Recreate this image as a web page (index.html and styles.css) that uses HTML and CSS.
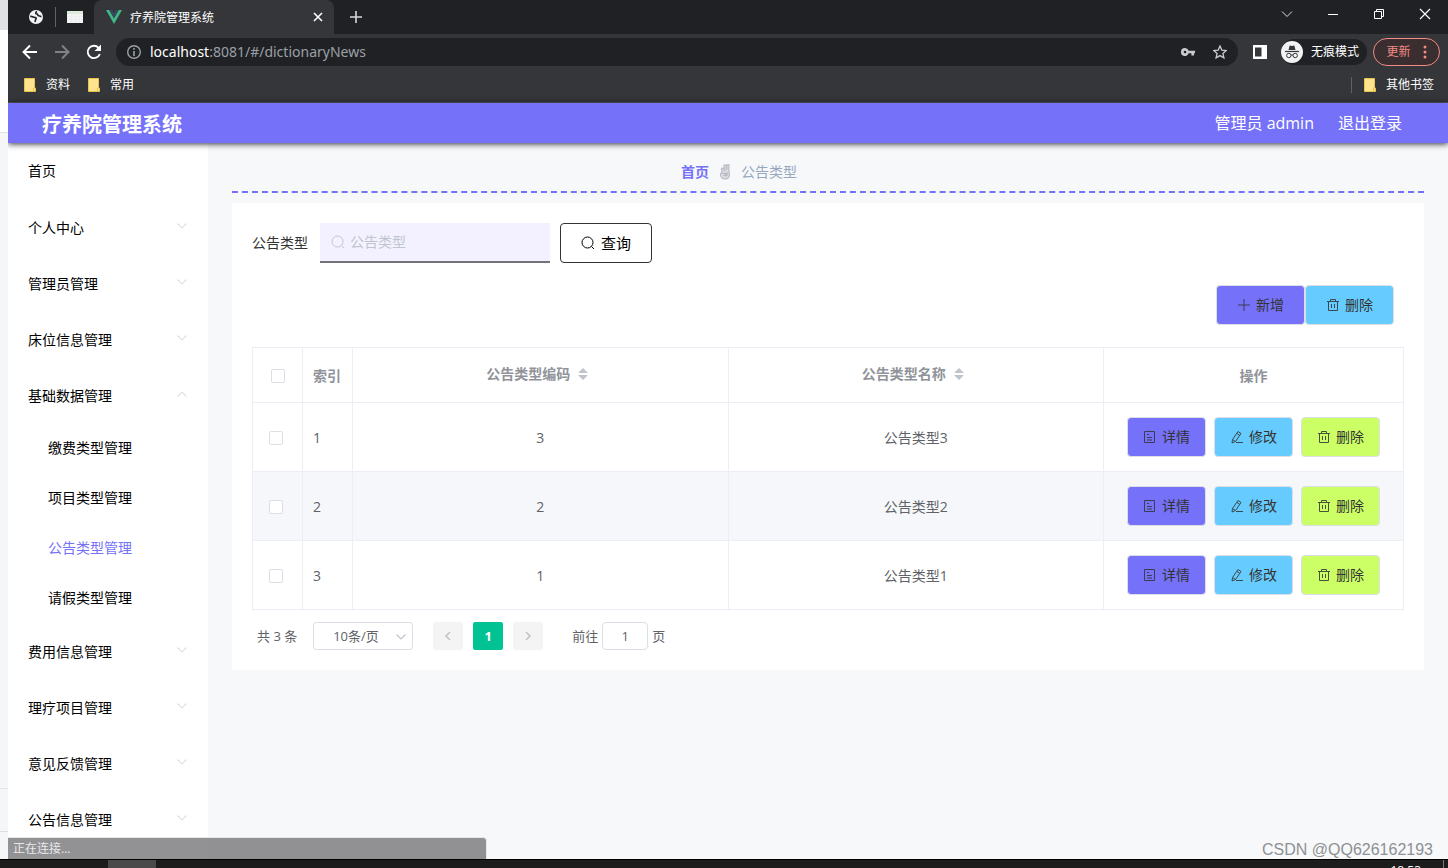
FILE: index.html
```html
<!DOCTYPE html>
<html lang="zh-CN">
<head>
<meta charset="utf-8">
<title>疗养院管理系统</title>
<link rel="stylesheet" href="styles.css">
</head>
<body>
<svg class="defs" aria-hidden="true">
  <symbol id="chev" viewBox="0 0 12 12"><path d="M1.500 3.500 6 8l4.500-4.500" fill="none" stroke="currentColor" stroke-width="1.200"/></symbol>
  <symbol id="search" viewBox="0 0 14 14"><circle cx="6.500" cy="6.500" r="5.500" fill="none" stroke="currentColor"/><path d="m10.500 10.500 2.500 2.500" stroke="currentColor"/></symbol>
  <symbol id="trash" viewBox="0 0 14 14"><path d="M1 3.500h12M2.500 3.500v9h9v-9M4.500 3.500v-2h5v2M5.500 6v4M8.500 6v4" fill="none" stroke="currentColor"/></symbol>
  <symbol id="doc" viewBox="0 0 14 14"><path d="M1.500 1.500h10v11h-10zM4 4.500h2M4 7.500h5M4 10h5" fill="none" stroke="currentColor"/></symbol>
  <symbol id="edit" viewBox="0 0 14 14"><path d="M8 1.500 11 3.500 5.500 11.500 2 13 2.500 9.500zM7 3.500l2.800 2M2.500 9.500l3 2M6 12.500h7" fill="none" stroke="currentColor"/></symbol>
  <symbol id="plus" viewBox="0 0 14 14"><path d="M7 1v12M1 7h12" stroke="currentColor"/></symbol>
  <symbol id="folder" viewBox="0 0 12 14"><path d="M.5.500h10v9.500h1v3.500H.5z" fill="#ffe48f" stroke="#e8c44c"/><path d="M9.500 13.500V10h1" fill="none" stroke="#e8c44c"/></symbol>
</svg>
<div class="screen">
  <div class="desk">
    <div class="behind"><i class="b-tab"></i><i class="b-page"></i><i class="b-rest"></i><i class="b-row"></i><i class="b-foot"></i></div>
    <div class="browser">
      <div class="tabs">
        <button class="pinned" aria-label="标签页"><svg width="14" height="14" viewBox="0 0 14 14"><circle cx="7" cy="7" r="7" fill="#f1f3f4"/><path d="M1.200 6.500c1.800-.5 2.300.8 3.800.8 2 0 2.800.8 1.800 2-.6.800-.3 1.500-.8 2.700M8 1.500C6 2.500 6.500 4 8.200 4c.5 1.500 1.500 2 2.300 2 .8.200 1.300.6 2 .6" fill="none" stroke="#202124" stroke-width="1.600"/></svg></button>
        <i class="sep"></i>
        <button class="pinned" aria-label="标签页"><svg width="16" height="12" viewBox="0 0 16 12"><path d="M0 0h16v12H0z" fill="#f2f5f3"/><path d="M0 0h16v3H0z" fill="#dcebdc"/><path d="M0 5.500h16M0 8.500h16M4.500 3v9M8.500 3v9M12.500 3v9" stroke="#ebeeec"/></svg></button>
        <div class="tab">
          <svg width="16" height="14" viewBox="0 0 16 14"><path d="M0 0h3.200L8 8.300 12.800 0H16L8 14z" fill="#41b883"/><path d="M3.200 0h3L8 3.200 9.800 0h3L8 8.300z" fill="#35495e"/></svg>
          <span class="tab-title">疗养院管理系统</span>
          <button class="x" aria-label="关闭标签页"><svg width="10" height="10" viewBox="0 0 10 10"><path d="m1 1 8 8M9 1 1 9" stroke="#fff" stroke-width="1.600"/></svg></button>
        </div>
        <button class="new" aria-label="新标签页"><svg width="12" height="12" viewBox="0 0 12 12"><path d="M6 0v12M0 6h12" stroke="#d5d7da" stroke-width="1.600"/></svg></button>
        <div class="win">
          <button aria-label="搜索标签页"><svg width="12" height="12" viewBox="0 0 12 12"><path d="m1 3.500 5 5 5-5" fill="none" stroke="#ddd"/></svg></button>
          <button aria-label="最小化"><svg width="12" height="12" viewBox="0 0 12 12"><path d="M1 6.500h10" stroke="#fff"/></svg></button>
          <button aria-label="还原"><svg width="12" height="12" viewBox="0 0 12 12"><path d="M1.500 3.500h7v7h-7zM3.500 3.500v-2h7v7h-2" fill="none" stroke="#fff"/></svg></button>
          <button aria-label="关闭"><svg width="12" height="12" viewBox="0 0 12 12"><path d="m1 1 10 10M11 1 1 11" stroke="#fff" stroke-width="1.200"/></svg></button>
        </div>
      </div>
      <div class="toolbar">
        <button aria-label="后退"><svg width="16" height="16" viewBox="0 0 16 16"><path d="M15 8H2M8 1.500 1.500 8 8 14.500" fill="none" stroke="#fff" stroke-width="1.900"/></svg></button>
        <button aria-label="前进"><svg width="16" height="16" viewBox="0 0 16 16"><path d="M1 8h13M8 1.500 14.500 8 8 14.500" fill="none" stroke="#808387" stroke-width="1.900"/></svg></button>
        <button aria-label="刷新"><svg width="16" height="16" viewBox="0 0 16 16"><path d="M13.800 10A6.200 6.200 0 1 1 12.600 3.800" fill="none" stroke="#fff" stroke-width="1.900"/><path d="M15 .5V7H8.500z" fill="#fff"/></svg></button>
        <div class="omni">
          <svg width="14" height="14" viewBox="0 0 14 14"><circle cx="7" cy="7" r="6.300" fill="none" stroke="#9aa0a6" stroke-width="1.400"/><path d="M7 3v1.800M7 6v5" stroke="#9aa0a6" stroke-width="1.600"/></svg>
          <span class="url"><b>localhost</b>:8081/#/dictionaryNews</span>
          <button aria-label="密码"><svg width="14" height="8" viewBox="0 0 14 8"><path fill="#c8cacd" fill-rule="evenodd" d="M4 0a4 4 0 0 1 3.700 2.700H14v2.600h-1v2.200h-2.600V5.300H7.700A4 4 0 1 1 4 0zm0 2.700a1.300 1.300 0 1 0 0 2.600 1.300 1.300 0 0 0 0-2.600z"/></svg></button>
          <button aria-label="收藏"><svg width="14" height="14" viewBox="0 0 14 14"><path d="m7 1 1.800 4.100 4.400.4-3.300 3 1 4.400L7 10.600l-3.900 2.300 1-4.400-3.300-3 4.400-.4z" fill="none" stroke="#c8cacd" stroke-width="1.300"/></svg></button>
        </div>
        <button class="side" aria-label="侧边栏"><svg width="14" height="14" viewBox="0 0 14 14"><path d="M0 0h14v14H0zM2 2.500v9h6.500v-9z" fill="#fff" fill-rule="evenodd"/></svg></button>
        <button class="incog"><svg width="22" height="22" viewBox="0 0 22 22"><circle cx="11" cy="11" r="11" fill="#f1f3f4"/><path d="m7.500 9 1.200-4.500L11 5l2.300-.5L14.500 9z" fill="#35363a"/><path d="M4 10.500h14" stroke="#35363a" stroke-width="1.200"/><g fill="none" stroke="#35363a"><circle cx="7.800" cy="14.500" r="2.200"/><circle cx="14.200" cy="14.500" r="2.200"/><path d="M10 14h2"/></g></svg>无痕模式</button>
        <button class="update">更新<svg width="4" height="14" viewBox="0 0 4 14" fill="#f28b82"><circle cx="2" cy="2" r="1.500"/><circle cx="2" cy="7" r="1.500"/><circle cx="2" cy="12" r="1.500"/></svg></button>
      </div>
      <div class="marks">
        <a href="#"><svg width="12" height="14"><use href="#folder"/></svg>资料</a>
        <a href="#"><svg width="12" height="14"><use href="#folder"/></svg>常用</a>
        <a href="#" class="other"><svg width="12" height="14"><use href="#folder"/></svg>其他书签</a>
      </div>
      <div class="app">
        <header class="top">
          <h1>疗养院管理系统</h1>
          <a href="#">管理员 admin</a>
          <a href="#">退出登录</a>
        </header>
        <div class="body">
          <nav class="nav">
            <a href="#" class="item home">首页</a>
            <a href="#" class="item">个人中心<svg width="12" height="12"><use href="#chev"/></svg></a>
            <a href="#" class="item">管理员管理<svg width="12" height="12"><use href="#chev"/></svg></a>
            <a href="#" class="item">床位信息管理<svg width="12" height="12"><use href="#chev"/></svg></a>
            <a href="#" class="item open">基础数据管理<svg width="12" height="12"><use href="#chev"/></svg></a>
            <a href="#" class="sub">缴费类型管理</a>
            <a href="#" class="sub">项目类型管理</a>
            <a href="#" class="sub active">公告类型管理</a>
            <a href="#" class="sub">请假类型管理</a>
            <a href="#" class="item">费用信息管理<svg width="12" height="12"><use href="#chev"/></svg></a>
            <a href="#" class="item">理疗项目管理<svg width="12" height="12"><use href="#chev"/></svg></a>
            <a href="#" class="item">意见反馈管理<svg width="12" height="12"><use href="#chev"/></svg></a>
            <a href="#" class="item">公告信息管理<svg width="12" height="12"><use href="#chev"/></svg></a>
          </nav>
          <main class="main">
            <div class="crumbs"><a href="#">首页</a><svg width="12" height="16" viewBox="0 0 12 16"><path d="M3 8 2.500 4.500 4.500 4 5.500 7 5 1h2l.5 5L8 .8h2L9.800 7l.7 3c0 3-1.500 5-4.500 5s-4.500-2-4.500-5z" fill="#dcdee2" stroke="#b9bcc4" stroke-width="1.200"/><path d="M3 9.500h3.500v2.200H4.500M8 8v4" fill="none" stroke="#b2b5be" stroke-width="1.200"/></svg><span>公告类型</span></div>
            <section class="card">
              <form class="query">
                <label for="q">公告类型</label>
                <div class="field"><svg width="14" height="14"><use href="#search"/></svg><input id="q" type="text" placeholder="公告类型"></div>
                <button type="button"><svg width="14" height="14"><use href="#search"/></svg>查询</button>
              </form>
              <div class="actions">
                <button class="btn wide violet"><svg width="14" height="14"><use href="#plus"/></svg>新增</button><button class="btn wide sky"><svg width="14" height="14"><use href="#trash"/></svg>删除</button>
              </div>
              <table>
                <colgroup><col class="c-s"><col class="c-s"><col><col><col class="c-op"></colgroup>
                <thead><tr>
                  <th class="chk"><input type="checkbox" aria-label="全选"></th>
                  <th class="idx">索引</th>
                  <th><span class="sort">公告类型编码<svg width="10" height="12" viewBox="0 0 10 12"><path d="m0 5 5-5 5 5zM0 7h10l-5 5z" fill="#c0c4cc"/></svg></span></th>
                  <th><span class="sort">公告类型名称<svg width="10" height="12" viewBox="0 0 10 12"><path d="m0 5 5-5 5 5zM0 7h10l-5 5z" fill="#c0c4cc"/></svg></span></th>
                  <th>操作</th>
                </tr></thead>
                <tbody>
                <tr><td class="chk"><input type="checkbox" aria-label="选择 1"></td><td class="idx">1</td><td>3</td><td>公告类型3</td>
                  <td class="op"><div class="ops"><button class="btn violet"><svg width="14" height="14"><use href="#doc"/></svg>详情</button><button class="btn sky"><svg width="14" height="14"><use href="#edit"/></svg>修改</button><button class="btn lime"><svg width="14" height="14"><use href="#trash"/></svg>删除</button></div></td></tr>
                <tr class="stripe"><td class="chk"><input type="checkbox" aria-label="选择 2"></td><td class="idx">2</td><td>2</td><td>公告类型2</td>
                  <td class="op"><div class="ops"><button class="btn violet"><svg width="14" height="14"><use href="#doc"/></svg>详情</button><button class="btn sky"><svg width="14" height="14"><use href="#edit"/></svg>修改</button><button class="btn lime"><svg width="14" height="14"><use href="#trash"/></svg>删除</button></div></td></tr>
                <tr><td class="chk"><input type="checkbox" aria-label="选择 3"></td><td class="idx">3</td><td>1</td><td>公告类型1</td>
                  <td class="op"><div class="ops"><button class="btn violet"><svg width="14" height="14"><use href="#doc"/></svg>详情</button><button class="btn sky"><svg width="14" height="14"><use href="#edit"/></svg>修改</button><button class="btn lime"><svg width="14" height="14"><use href="#trash"/></svg>删除</button></div></td></tr>
                </tbody>
              </table>
              <div class="pager">
                <span>共 3 条</span>
                <div class="size"><select aria-label="每页条数"><option>10条/页</option></select><svg width="12" height="12"><use href="#chev"/></svg></div>
                <div class="pages">
                  <button class="pg" aria-label="上一页" disabled><svg width="12" height="12" viewBox="0 0 12 12"><path d="M8 2 4 6l4 4" fill="none" stroke="#c0c4cc" stroke-width="1.600"/></svg></button>
                  <button class="pg on">1</button>
                  <button class="pg" aria-label="下一页" disabled><svg width="12" height="12" viewBox="0 0 12 12"><path d="m4 2 4 4-4 4" fill="none" stroke="#c0c4cc" stroke-width="1.600"/></svg></button>
                </div>
                <label class="jump">前往<input type="text" value="1">页</label>
              </div>
            </section>
          </main>
        </div>
      </div>
      <div class="status">正在连接...</div>
      <div class="mark">CSDN @QQ626162193</div>
    </div>
  </div>
  <div class="taskbar"><i class="task"></i><span class="clock">18:53</span><i class="peek"></i></div>
</div>
</body>
</html>
```
FILE: styles.css
```css
* { box-sizing: border-box; }
body { margin: 0; font-family: "Open Sans", "Noto Sans CJK SC", sans-serif; font-size: 14px; line-height: 20px; color: #606266; }
button, input, select { font: inherit; color: inherit; margin: 0; }
button { border: 0; background: none; padding: 0; display: inline-flex; align-items: center; justify-content: center; white-space: nowrap; }
a { text-decoration: none; color: inherit; }
svg { display: block; flex: none; }
.defs { display: none; }
.screen { height: 100vh; display: flex; flex-direction: column; overflow: hidden; }
.desk { flex: 1; min-height: 0; display: flex; }
.behind { width: 8px; display: flex; flex-direction: column; background: #f5f6f8; }
.b-tab { height: 30px; background: #dfe1e5; }
.b-page { height: 103px; background: #fff; border-bottom: 1px solid #e0e2e6; }
.b-rest { flex: 1; }
.b-row { height: 43px; border-top: 1px solid #e4e6ea; }
.b-foot { height: 28px; border-top: 1px solid #dcdee2; }
.browser { flex: 1; min-width: 0; display: flex; flex-direction: column; position: relative; overflow: hidden; }

.tabs { flex: none; height: 34px; background: #202124; display: flex; align-items: center; }
.pinned { width: 38px; height: 34px; }
.pinned:first-child { width: 46px; padding-left: 10px; }
.sep { width: 1px; height: 20px; background: #5f6368; margin-left: 1px; }
.tab { width: 240px; height: 34px; background: #35363a; border-radius: 8px 8px 0 0; padding: 0 11px 0 12px; display: flex; align-items: center; gap: 8px; color: #fff; font-size: 12px; }
.tab-title { flex: 1; padding-top: 2px; }
.new { width: 44px; height: 34px; }
.win { margin-left: auto; align-self: flex-start; display: flex; }
.win button { width: 46px; height: 28px; }

.toolbar { flex: none; height: 36px; background: #35363a; display: flex; align-items: center; padding: 0 8px 0 6px; }
.toolbar > button { width: 32px; height: 28px; flex: none; }
.omni { flex: 1; height: 28px; margin-left: 6px; background: #202124; border-radius: 14px; display: flex; align-items: center; padding: 0 2px 0 11px; gap: 9px; }
.omni button { width: 32px; height: 28px; margin-left: -9px; }
.url { flex: 1; font-family: "Noto Sans", sans-serif; font-size: 14px; color: #9aa0a6; }
.url b { font-weight: 400; color: #fff; }
.toolbar > .side { width: 43px; }
.toolbar > .incog { width: 86px; height: 26px; background: #202124; border-radius: 13px; color: #fff; font-size: 12px; gap: 8px; padding-right: 8px; }
.toolbar > .update { width: 67px; margin-left: 6px; border: 1px solid #f28b82; border-radius: 14px; color: #f28b82; background: #3a2e30; font-size: 12px; gap: 12px; }
.marks { flex: none; height: 33px; background: #35363a; border-bottom: 1px solid #5b5c60; display: flex; align-items: center; gap: 18px; padding: 0 14px 3px 16px; color: #fff; font-size: 12px; }
.marks a { display: flex; align-items: center; gap: 10px; }
.marks .other { margin-left: auto; border-left: 1px solid #5f6368; padding-left: 12px; height: 16px; }

.app { flex: 1; min-height: 0; display: flex; flex-direction: column; background: #f6f8fa; }
.top { flex: none; height: 40px; background: #7571f9; color: #fff; display: flex; align-items: center; gap: 24px; padding: 0 46px 0 34px; font-size: 16px; box-shadow: 0 1px 6px rgba(0,0,0,.8); position: relative; }
.top h1 { margin: 0 auto 0 0; padding-top: 3px; font-size: 20px; font-weight: 700; line-height: 36px; }
.body { flex: 1; min-height: 0; display: flex; overflow: hidden; }
.nav { flex: none; width: 200px; background: #fff; color: #000; }
.nav a { display: flex; align-items: center; padding: 0 20px; }
.item { height: 56px; justify-content: space-between; }
.nav .home { height: 57px; padding-bottom: 2px; }
.item svg { color: #dfe2e8; margin: 0 0 4px; }
.open svg { transform: rotate(180deg); }
.nav .sub { height: 50px; padding-left: 40px; padding-bottom: 2px; }
.nav .active { color: #7571f9; }
.main { flex: 1; min-width: 0; padding: 0 24px; }
.crumbs { height: 50px; padding: 10px 178px 0 0; border-bottom: 2px dashed #7571f9; display: flex; align-items: center; justify-content: center; gap: 10px; color: #97a8be; }
.crumbs a { color: #7571f9; font-weight: 700; }
.card { background: #fff; margin-top: 10px; padding: 20px 20px 19px; }
.query { display: flex; align-items: center; }
.query label { color: #333; margin-right: 12px; }
.field { width: 230px; height: 40px; background: #f3f1ff; border-bottom: 2px solid #737278; display: flex; align-items: center; gap: 5px; padding-left: 11px; color: #c0c4cc; margin-right: 10px; }
.field input { flex: 1; min-width: 0; border: 0; background: none; outline: 0; padding: 0; }
.field input::placeholder { color: #c0c4cc; opacity: 1; }
.query button { width: 92px; height: 40px; border: 1px solid #333; border-radius: 4px; color: #000; gap: 6px; font-size: 15px; }
.actions { display: flex; justify-content: flex-end; padding: 22px 10px; }
.btn { width: 79px; height: 40px; border: 1px solid #dcdfe6; border-radius: 4px; gap: 5px; color: #333; }
.wide { width: 89px; }
.violet { background: #7571f9; }
.sky { background: #66ccff; }
.lime { background: #ccff66; }
.btn svg { opacity: .85; }
table { width: 100%; table-layout: fixed; border-collapse: collapse; text-align: center; }
.c-s { width: 50px; }
.c-op { width: 300px; }
th, td { border: 1px solid #ebeef5; padding: 2px 0 0; height: 69px; }
th { height: 55px; color: #909399; font-weight: 700; }
td.op { padding: 0; }
.stripe { background: #f5f7fa; }
.idx { text-align: left; padding-left: 10px; }
td.chk { padding-right: 3px; }
input[type=checkbox] { appearance: none; width: 14px; height: 14px; border: 1px solid #dcdfe6; border-radius: 2px; background: #fff; display: block; margin: 0 auto; }
.sort { display: flex; align-items: center; justify-content: center; gap: 8px; padding: 0 6px 4px 0; }
.ops { display: flex; justify-content: center; gap: 8px; }
.pager { display: flex; align-items: center; padding: 12px 5px 2px; font-size: 13px; height: 41px; }
.size { position: relative; width: 100px; margin: 0 20px 0 16px; }
.size select { appearance: none; width: 100%; height: 28px; border: 1px solid #dcdfe6; border-radius: 3px; background: #fff; padding: 0 19px; display: block; }
.size svg { position: absolute; right: 6px; top: 9px; color: #c0c4cc; pointer-events: none; }
.pages { display: flex; gap: 10px; }
.pg { width: 30px; height: 28px; border-radius: 2px; background: #f4f4f5; }
.on { background: #00c292; color: #fff; font-weight: 700; }
.jump { margin-left: 29px; display: flex; align-items: center; gap: 4px; }
.jump input { width: 46px; height: 28px; border: 1px solid #dcdfe6; border-radius: 4px; text-align: center; padding: 0; background: #fff; }

.status { position: absolute; left: 0; bottom: 0; width: 479px; height: 22px; background: rgba(128,128,130,.86); color: #e8e8ea; font-size: 12px; line-height: 21px; padding-left: 5px; border: 1px solid #e6e7e9; border-width: 1px 1px 0 0; border-radius: 0 4px 0 0; }
.mark { position: absolute; right: 15px; bottom: 0; font: 16px/18px "Liberation Sans", sans-serif; color: #8e9093; }
.taskbar { flex: none; height: 9px; background: #1c1c1c; border-top: 1px solid #000; display: flex; padding: 0 4px 0 108px; overflow: hidden; }
.task { width: 48px; background: #4a4a4a; }
.clock { margin: 4px 22px 0 auto; color: #fff; font-size: 12px; line-height: 14px; }
.peek { width: 1px; background: #777; }
```
